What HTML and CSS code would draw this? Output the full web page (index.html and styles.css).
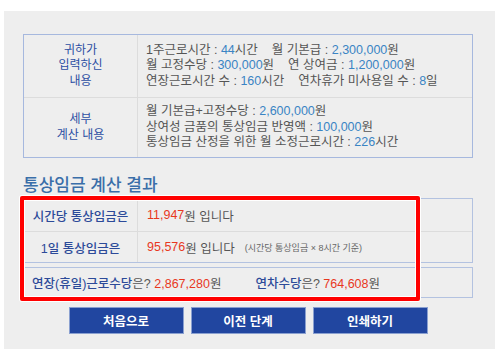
FILE: index.html
```html
<!DOCTYPE html>
<html lang="ko">
<head>
<meta charset="utf-8">
<link rel="stylesheet" href="styles.css">
</head>
<body>
<div class="panel">
  <div class="info">
    <div class="label">귀하가<br>입력하신<br>내용</div>
    <div class="content">
      <div>1주근로시간 : <span class="v">44</span>시간<span class="sp"></span>월 기본급 : <span class="v">2,300,000</span>원</div>
      <div>월 고정수당 : <span class="v">300,000</span>원<span class="sp"></span>연 상여금 : <span class="v">1,200,000</span>원</div>
      <div>연장근로시간 수 : <span class="v">160</span>시간<span class="sp"></span>연차휴가 미사용일 수 : <span class="v">8</span>일</div>
    </div>
    <div class="label row2">세부<br>계산 내용</div>
    <div class="content row2">
      <div>월 기본급+고정수당 : <span class="v">2,600,000</span>원</div>
      <div>상여성 금품의 통상임금 반영액 : <span class="v">100,000</span>원</div>
      <div>통상임금 산정을 위한 월 소정근로시간 : <span class="v">226</span>시간</div>
    </div>
  </div>

  <h2 class="title">통상임금 계산 결과</h2>

  <div class="result">
    <div class="rbox">
      <div class="rlabel">시간당 통상임금은</div>
      <div class="rval"><span class="red">11,947</span>원 입니다</div>
      <div class="rlabel r2">1일 통상임금은</div>
      <div class="rval r2"><span class="red">95,576</span>원 입니다 <span class="note">(시간당 통상임금 × 8시간 기준)</span></div>
    </div>
    <div class="rbox2">
      <div class="pay"><span class="dk">연장(휴일)근로수당</span>은? <span class="red">2,867,280</span>원</div>
      <div class="pay"><span class="dk">연차수당</span>은? <span class="red">764,608</span>원</div>
    </div>
    <div class="hl"></div>
  </div>

  <div class="buttons">
    <button class="btn">처음으로</button>
    <button class="btn">이전 단계</button>
    <button class="btn">인쇄하기</button>
  </div>
</div>
</body>
</html>
```
FILE: styles.css
```css
* { box-sizing: border-box; }
html, body { margin: 0; padding: 0; background: #fff; }
body {
  font-family: "Liberation Sans", "Noto Sans CJK KR", sans-serif;
  font-size: 12px;
  color: #555;
  overflow: hidden;
}
.panel {
  margin: 11px 0 0 4px;
  width: 491px;
  height: 338px;
  background: #eeeeee;
  padding: 23px 0 0 19px;
}
.info {
  width: 450px;
  border: 1px solid #a6b8de;
  display: grid;
  grid-template-columns: 114px 1fr;
  grid-template-rows: 62px 60px;
}
.label {
  display: flex;
  align-items: center;
  justify-content: center;
  text-align: center;
  color: #2c4fa3;
  line-height: 15.5px;
  border-right: 1px solid #dcdcdc;
}
.content {
  display: flex;
  flex-direction: column;
  justify-content: center;
  padding-left: 8px;
  font-size: 12.5px;
  line-height: 15.5px;
  white-space: nowrap;
}
.row2 { border-top: 1px solid #dcdcdc; }
.v { color: #3a84c4; }
.sp { display: inline-block; width: 14px; }
.title {
  margin: 13px 0 0 0;
  height: 27px;
  font-size: 17px;
  font-weight: 500;
  color: #3a6ea9;
  line-height: 26px;
  font-family: "Noto Sans CJK KR", sans-serif;
}
.result {
  position: relative;
  width: 450px;
}
.rbox {
  border: 1px solid #b3c2e0;
  display: grid;
  grid-template-columns: 114px 1fr;
  grid-template-rows: 32px 31px;
}
.rlabel {
  display: flex;
  align-items: center;
  justify-content: center;
  color: #2c4a99;
  font-size: 12.5px;
  font-weight: 500;
  border-right: 1px solid #dcdcdc;
}
.rval {
  display: flex;
  align-items: center;
  padding-left: 9px;
  font-size: 12.5px;
  white-space: nowrap;
}
.r2 { border-top: 1px solid #dcdcdc; }
.note { font-size: 9px; color: #666; margin-left: 10px; }
.red { color: #e8381e; }
.rbox2 {
  margin-top: 4px;
  height: 31px;
  border: 1px solid #b3c2e0;
  display: flex;
  align-items: center;
  padding-left: 8px;
  gap: 34px;
  font-size: 12.5px;
}
.dk { color: #2c4a99; font-weight: 500; }
.hl {
  position: absolute;
  left: -3px;
  top: -2px;
  width: 400px;
  height: 105px;
  border: 4px solid #ff0000;
  box-shadow: 0 0 0 1px #fff, inset 0 0 0 1px #fff;
  border-radius: 2px;
}
.buttons {
  width: 450px;
  display: flex;
  justify-content: center;
  gap: 7px;
  margin-top: 9px;
}
.btn {
  width: 115px;
  height: 27px;
  background: #2146a0;
  border: 1px solid #8aa0d0;
  color: #fff;
  font-family: "Noto Sans CJK KR", sans-serif;
  font-size: 12.5px;
  font-weight: 700;
  padding: 0;
}
```
